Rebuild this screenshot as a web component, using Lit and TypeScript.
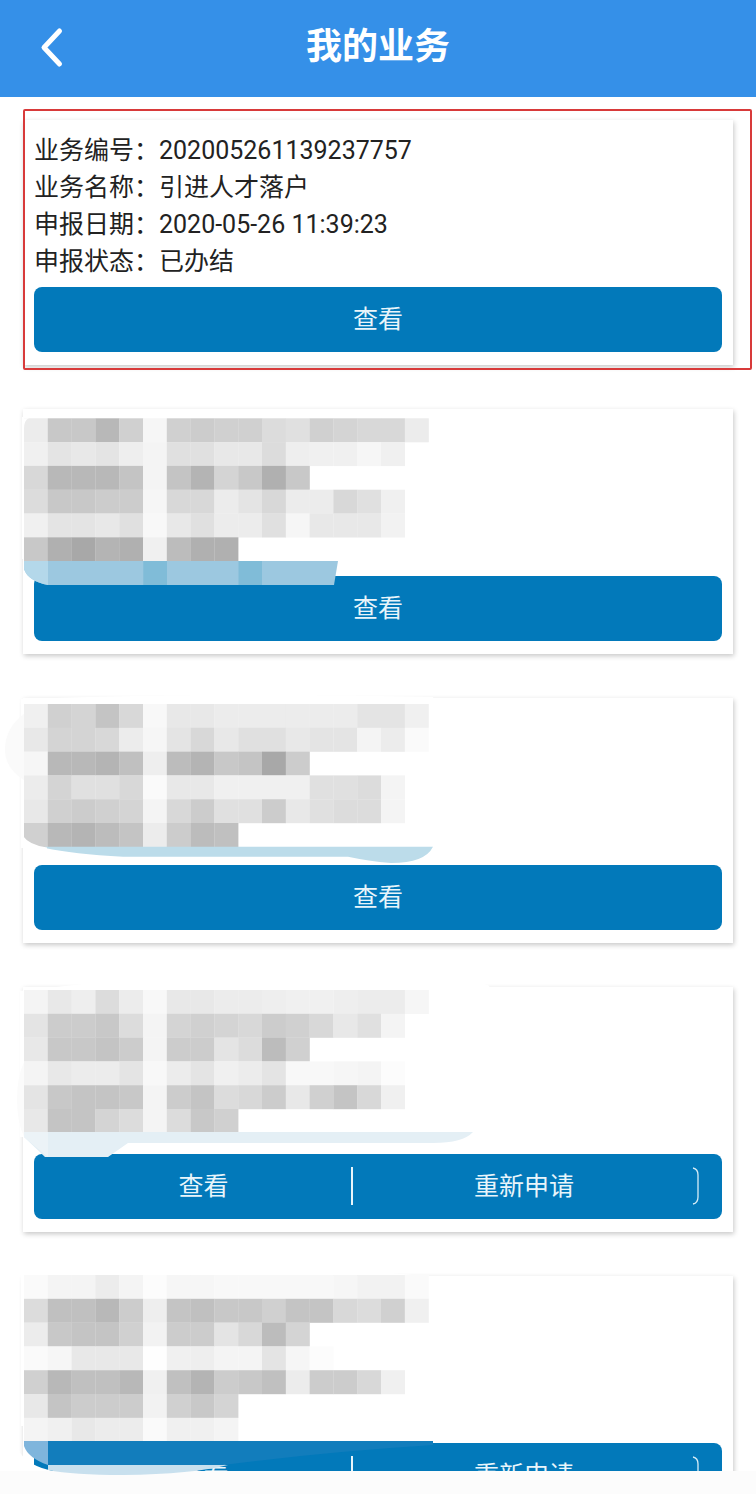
import { LitElement, html, css, svg } from "lit";
import { customElement } from "lit/decorators.js";

const CELL = 23.8;
type Blob = { d: string; fill: string };
type Mask = { top: number; rows: string[]; under: Blob[]; over: Blob[] };

// Redaction mosaics: one row per string, two hex digits of grey per cell.
const masks: Mask[] = [
  {
    top: 9.3,
    rows: [
      "ec c8 c8 b8 d0 f6 d0 cc d0 d0 dc e0 d0 d4 d8 d8 ec",
      "f0 e4 e8 e4 ee f4 e0 e0 e8 e8 dc ee f0 f0 f6 f0",
      "d8 b8 b8 b8 c4 f4 c4 b4 d4 c8 b0 c8",
      "dc c8 c8 cc cc f6 d8 d8 ec e4 d8 ec ec d8 e0 f0",
      "f0 e4 e4 e8 e0 f8 e8 e0 ec ec e0 f6 e8 e8 e8 f2",
      "c8 b0 a8 b4 b0 f0 bc b0 b0",
    ],
    under: [{ d: "M-1 8H26V20H1V150H-1Z", fill: "#fff" }],
    over: [
      { d: "M1 152H315L311 176H25Q5 172 1 160Z", fill: "#9cc8e0" },
      { d: "M1 152H25V176Q5 172 1 160Z", fill: "#b4d8ea" },
      { d: "M120.3 152H144V176H120.3ZM215.5 152H239V176H215.5Z", fill: "#80bcd8" },
      { d: "M1 9.3H6Q1 11 1 20Z", fill: "#fff" },
    ],
  },
  {
    top: 6,
    rows: [
      "f0 d0 d4 c4 d8 f8 e8 e8 ec ec ec ec ec ec e4 e4 f0",
      "e8 d4 d4 d8 ec f6 e4 d8 e8 e0 e0 e8 e4 e4 f4 ec fa",
      "f6 b8 b8 b4 c0 ee bc b4 c8 c4 a8 cc",
      "ec d4 e0 e0 d8 fa e8 e8 f0 f0 f0 f0 e0 e0 dc f4",
      "e8 d0 cc d0 d4 f4 d8 cc e0 e0 cc e8 e0 dc dc f4",
      "d0 b8 b4 bc c4 ec cc bc c0",
    ],
    under: [
      { d: "M-2 1Q200 -6 410 -1L412 7H1V150H-2Z", fill: "#fff" },
      { d: "M1 16Q-18 30 -18 52Q-18 70 1 82Z", fill: "#fafafa" },
    ],
    over: [
      { d: "M22 148.7H410Q402 165 368 165Q345 163 325 158.7L100 158.7Q50 156 22 150Z", fill: "#bcdcea" },
      { d: "M0 138Q6 147 24 149.500V151H0Z", fill: "#fff" },
    ],
  },
  {
    top: 3,
    rows: [
      "f4 e8 ee dc ec f8 e8 e8 ec ec ee f0 f0 ee ec ec f6",
      "e4 cc cc c8 dc f4 d4 d0 d4 d8 cc d0 d8 e8 e0 f4",
      "e8 c8 c8 c4 cc f4 cc cc e4 dc bc d0",
      "f4 e8 ec ec e4 f8 ec e4 f0 ec e4 f8 f8 f6 f4 fc",
      "e4 c8 c4 c4 c8 f4 cc c4 dc d8 cc e8 d0 c4 d8 f0",
      "e8 c4 c4 d4 dc f4 dc c8 d0",
    ],
    under: [
      { d: "M-3 4Q100 -8 230 -18Q340 -28 465 -2L470 4H1V150H-3Z", fill: "#fff" },
      { d: "M1 75Q-6 90 -6 112Q-6 135 1 150Z", fill: "#fbfbfb" },
    ],
    over: [
      { d: "M1 145H450Q440 156 410 156H105L85 170H22L1 150Z", fill: "#e4eff5" },
      { d: "M1 145H25V170L1 150Z", fill: "#ecf3f7" },
    ],
  },
  {
    top: -1,
    rows: [
      "fa f4 f4 ec f4 fc f6 f6 f8 f8 f8 f8 f8 f6 f2 f2 fa",
      "dc c0 c0 b8 cc ee c4 c0 c8 c8 d0 c4 c4 d8 dc d0 f0",
      "ec c8 c4 c4 d0 f2 cc cc e4 d8 bc d4",
      "fa f6 e8 e8 e8 fe f0 ee f4 f4 e4 f6 fc",
      "d0 b8 c0 c0 b8 f0 c0 b4 cc c8 c0 ec cc cc d8 f0",
      "e8 c4 cc cc cc f2 d0 c8 d4",
      "f4 f0 e8 ec ec fa f0 f0 f4",
    ],
    under: [{ d: "M-2 -4H250Q330 -8 400 0V-1H1V150H-2Z", fill: "#fff" }],
    over: [
      { d: "M1 165H410V169Q300 176 200 189H25Q5 180 1 165Z", fill: "#127dbc" },
      { d: "M1 165H25V189Q5 182 1 170Z", fill: "#7fb5dc" },
      { d: "M-4 175Q5 190 30 195H-4Z", fill: "#fff" },
      { d: "M25 189H205Q170 198 100 199Q50 199 25 194Z", fill: "#c8e0ee" },
    ],
  },
];

@customElement("mosaic-mask")
class MosaicMask extends LitElement {
  static properties = { mask: { attribute: false } };
  declare mask: Mask;

  static styles = css`
    :host {
      position: absolute;
      left: 0;
      top: 0;
      z-index: 1;
      pointer-events: none;
    }
    svg {
      display: block;
      overflow: visible;
      width: 710px;
      height: 245px;
    }
  `;

  render() {
    const m = this.mask;
    const cells = m.rows.flatMap((row, r) =>
      row.split(" ").map(
        (g, c) =>
          svg`<rect x=${1 + c * CELL} y=${m.top + r * CELL} width=${CELL + 0.2} height=${CELL + 0.2} fill=${"#" + g + g + g}></rect>`,
      ),
    );
    return html`<svg viewBox="0 0 710 245" aria-hidden="true">
      ${m.under.map((b) => svg`<path d=${b.d} fill=${b.fill}></path>`)}
      ${cells}
      ${m.over.map((b) => svg`<path d=${b.d} fill=${b.fill}></path>`)}
    </svg>`;
  }
}

@customElement("app-root")
class AppRoot extends LitElement {
  static styles = css`
    :host {
      display: block;
      position: relative;
      width: 756px;
      height: 1494px;
      overflow: hidden;
      background: #fff;
      font-family: Roboto, "Noto Sans CJK SC", sans-serif;
      color: #222;
    }
    .bar {
      height: 97px;
      background: #3590e8;
      display: flex;
      align-items: center;
      justify-content: center;
      position: relative;
    }
    .back {
      position: absolute;
      left: 36px;
      top: 26px;
      width: 32px;
      height: 44px;
    }
    .title {
      color: #fff;
      font-size: 36px;
      font-weight: 700;
      line-height: 97px;
      margin-top: -2px;
    }
    .list {
      display: flex;
      flex-direction: column;
      gap: 44px;
      padding: 23px 23px 0;
    }
    .card {
      position: relative;
      width: 710px;
      height: 245px;
      flex: none;
      box-sizing: border-box;
      padding: 10px 11px 0;
      background: #fff;
      box-shadow: 1px 2px 5px rgba(0, 0, 0, 0.22);
    }
    .info {
      height: 155.500px;
      padding-top: 1.500px;
      font-size: 25px;
      line-height: 37px;
    }
    .row {
      display: flex;
    }
    .label {
      width: 125px;
      flex: none;
      white-space: nowrap;
    }
    .action {
      height: 65px;
      box-sizing: border-box;
      padding-bottom: 6px;
      background: #0279ba;
      border-radius: 8px;
      display: flex;
      align-items: center;
      color: #e9f5fb;
      font-size: 25px;
    }
    .one {
      flex: 1;
      text-align: center;
    }
    .first {
      width: 317px;
      flex: none;
      box-sizing: border-box;
      padding-left: 22px;
      text-align: center;
    }
    .second {
      flex: 1;
      box-sizing: border-box;
      padding-left: 3px;
      text-align: center;
    }
    .rule {
      width: 2px;
      height: 38px;
      flex: none;
      background: #e9f5fb;
      margin-top: 5px;
    }
    .curve {
      width: 8px;
      height: 38px;
      flex: none;
      margin-top: 5px;
      margin-right: 22px;
    }
    .redbox {
      position: absolute;
      left: 0;
      top: -11px;
      width: 729px;
      height: 261px;
      box-sizing: border-box;
      border: 2px solid #d83a3a;
      border-radius: 2px;
      pointer-events: none;
    }
    .foot {
      position: absolute;
      left: 0;
      right: 0;
      bottom: 0;
      height: 23px;
      background: #fcfcfc;
    }
  `;

  private action(two: boolean) {
    if (!two) {
      return html`<div class="action"><span class="one">查看</span></div>`;
    }
    return html`<div class="action">
      <span class="first">查看</span>
      <span class="rule"></span>
      <span class="second">重新申请</span>
      <svg class="curve" viewBox="0 0 8 38" aria-hidden="true">
        <path d="M1 1Q6 2 6 8V30Q6 36 1 37" fill="none" stroke="#d8edf7" stroke-width="1.300"></path>
      </svg>
    </div>`;
  }

  render() {
    const rows = [
      ["业务编号：", "202005261139237757"],
      ["业务名称：", "引进人才落户"],
      ["申报日期：", "2020-05-26 11:39:23"],
      ["申报状态：", "已办结"],
    ];
    return html`
      <header class="bar">
        <svg class="back" viewBox="0 0 32 44" aria-hidden="true">
          <path d="M23.500 5L8 21.500L23.500 38" fill="none" stroke="#fff" stroke-width="5" stroke-linecap="round" stroke-linejoin="round"></path>
        </svg>
        <div class="title">我的业务</div>
      </header>
      <main class="list">
        <section class="card">
          <div class="info">
            ${rows.map(
              ([k, v]) => html`<div class="row"><span class="label">${k}</span><span>${v}</span></div>`,
            )}
          </div>
          ${this.action(false)}
          <div class="redbox"></div>
        </section>
        ${masks.map(
          (m, i) => html`<section class="card">
            <div class="info"></div>
            ${this.action(i >= 2)}
            <mosaic-mask .mask=${m}></mosaic-mask>
          </section>`,
        )}
      </main>
      <div class="foot"></div>
    `;
  }
}
